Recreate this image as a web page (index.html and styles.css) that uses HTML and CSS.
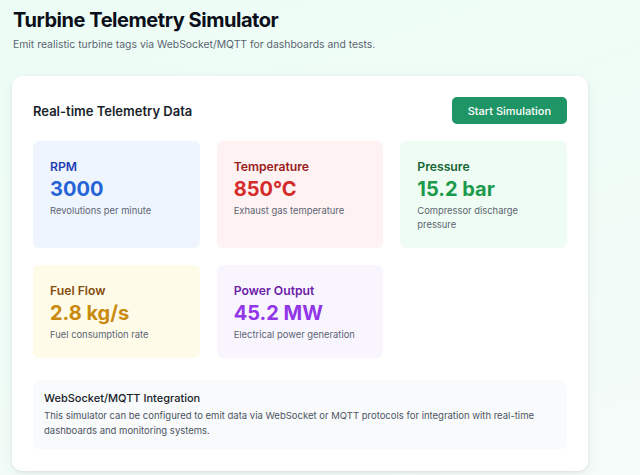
FILE: index.html
```html
<!DOCTYPE html>
<html lang="en">
<head>
<meta charset="UTF-8">
<meta name="viewport" content="width=device-width, initial-scale=1.0">
<title>Turbine Telemetry Simulator</title>
<link rel="stylesheet" href="styles.css">
</head>
<body>

<div class="page">
    <h1>Turbine Telemetry Simulator</h1>
    <p class="subtitle">Emit realistic turbine tags via WebSocket/MQTT for dashboards and tests.</p>

    <div class="card">
        <div class="card-header">
            <h2>Real-time Telemetry Data</h2>
            <button class="start-btn" type="button">Start Simulation</button>
        </div>

        <div class="metrics">
            <div class="metric blue">
                <div class="metric-label">RPM</div>
                <div class="metric-value">3000</div>
                <div class="metric-desc">Revolutions per minute</div>
            </div>
            <div class="metric red">
                <div class="metric-label">Temperature</div>
                <div class="metric-value">850°C</div>
                <div class="metric-desc">Exhaust gas temperature</div>
            </div>
            <div class="metric green">
                <div class="metric-label">Pressure</div>
                <div class="metric-value">15.2 bar</div>
                <div class="metric-desc">Compressor discharge pressure</div>
            </div>
            <div class="metric yellow">
                <div class="metric-label">Fuel Flow</div>
                <div class="metric-value">2.8 kg/s</div>
                <div class="metric-desc">Fuel consumption rate</div>
            </div>
            <div class="metric purple">
                <div class="metric-label">Power Output</div>
                <div class="metric-value">45.2 MW</div>
                <div class="metric-desc">Electrical power generation</div>
            </div>
        </div>

        <div class="info">
            <h3>WebSocket/MQTT Integration</h3>
            <p>This simulator can be configured to emit data via WebSocket or MQTT protocols for integration with real-time dashboards and monitoring systems.</p>
        </div>
    </div>
</div>

</body>
</html>
```

FILE: styles.css
```css
body {
    font-family: Inter, 'Noto Sans', sans-serif;
    margin: 0;
    padding: 0;
    min-height: 475px;
    background: linear-gradient(160deg, #ecfdf5 0%, #f1fcf7 60%, #f5fbf9 100%);
    color: #111827;
}
.page {
    padding: 8px 52px 0 12px;
}
h1 {
    margin: 0 0 0 1px;
    font-size: 20px;
    line-height: 24px;
    font-weight: 700;
    letter-spacing: -0.45px;
    color: #0b0f19;
}
.subtitle {
    margin: 5px 0 0 1px;
    font-size: 10.4px;
    line-height: 16px;
    color: #5b6472;
}
.card {
    margin-top: 23px;
    padding: 21px 21px 22px;
    background-color: #fff;
    border-radius: 10px;
    box-shadow: 0 1px 3px rgba(0, 0, 0, 0.08), 0 4px 14px rgba(0, 0, 0, 0.05);
}
.card-header {
    display: flex;
    justify-content: space-between;
    align-items: center;
}
h2 {
    margin: 0;
    font-size: 13px;
    line-height: 18px;
    font-weight: 600;
    color: #1a1f2b;
}
.start-btn {
    height: 27px;
    padding: 0 16px;
    border: none;
    border-radius: 5px;
    background-color: #1f9566;
    color: #fff;
    font-family: inherit;
    font-size: 11px;
    font-weight: 500;
    cursor: pointer;
}
.metrics {
    margin-top: 17px;
    display: grid;
    grid-template-columns: repeat(3, 1fr);
    gap: 17px;
}
.metric {
    padding: 18px 17px 16px;
    border-radius: 6px;
}
.metric-label {
    font-size: 12.2px;
    line-height: 16px;
    font-weight: 600;
}
.metric-value {
    font-size: 20px;
    line-height: 28px;
    font-weight: 700;
}
.metric-desc {
    margin-top: 1px;
    font-size: 9.4px;
    line-height: 14px;
    color: #5b6472;
}
.blue { background-color: #eff5ff; }
.blue .metric-label { color: #1e40af; }
.blue .metric-value { color: #2563d6; }
.red { background-color: #fef2f2; }
.red .metric-label { color: #991b1b; }
.red .metric-value { color: #d42b2b; }
.green { background-color: #effcf3; }
.green .metric-label { color: #166534; }
.green .metric-value { color: #1b9a4b; }
.yellow { background-color: #fefbe8; }
.yellow .metric-label { color: #854d0e; }
.yellow .metric-value { color: #c98a0e; }
.purple { background-color: #f9f5ff; }
.purple .metric-label { color: #6b21a8; }
.purple .metric-value { color: #9237e8; }
.info {
    margin-top: 22px;
    padding: 11px;
    background-color: #f9fafb;
    border-radius: 6px;
}
h3 {
    margin: 0;
    font-size: 11px;
    line-height: 15px;
    font-weight: 500;
    color: #1a1f2b;
}
.info p {
    margin: 2px 0 0;
    font-size: 9.5px;
    line-height: 15px;
    color: #4b5563;
}
```
